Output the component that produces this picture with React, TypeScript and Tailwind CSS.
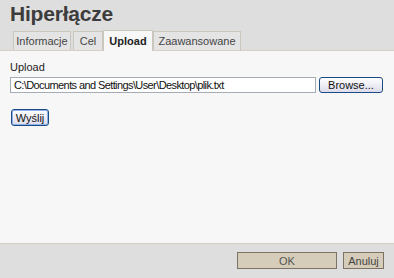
import React from "react";

const font = { fontFamily: '"Liberation Sans", Arial, sans-serif' };

export default function App() {
  return (
    <div
      className="w-[394px] h-[278px] bg-[#dedede] flex flex-col overflow-hidden text-[11px] text-[#222]"
      style={font}
    >
      <div className="h-[29px] pl-[10px] pt-[1px] text-[21px] leading-[25px] font-bold text-[#3c3c3c] tracking-[-0.2px]">
        Hiperłącze
      </div>
      <div className="h-[21px] flex items-end pl-[13px]">
        <div className="w-[58px] h-[19px] mr-[2px] border border-b-0 border-[#cbc7bc] bg-[#e4e4e4] text-[#444] leading-[18px] text-center">
          Informacje
        </div>
        <div className="w-[30px] h-[19px] border border-b-0 border-[#cbc7bc] bg-[#e4e4e4] text-[#444] leading-[18px] text-center">
          Cel
        </div>
        <div className="w-[50px] h-[21px] border border-b-0 border-[#cbc7bc] bg-[#f7f7f7] font-bold text-[#222] leading-[21px] text-center -mb-px relative z-10">
          Upload
        </div>
        <div className="w-[88px] h-[19px] border border-b-0 border-[#cbc7bc] bg-[#e4e4e4] text-[#444] leading-[18px] text-center">
          Zaawansowane
        </div>
      </div>
      <div className="h-[194px] bg-[#f7f7f7] border-t border-b border-[#d6cfc3] flex flex-col pl-[10px] pt-[9px]">
        <div className="leading-[14px] h-[16px]">Upload</div>
        <div className="flex items-center mt-[1px]">
          <div className="w-[306px] h-[16px] border border-[#a5acb5] bg-white pl-[3px] leading-[14px] text-[#111] tracking-[-0.6px] whitespace-nowrap">
            C:\Documents and Settings\User\Desktop\plik.txt
          </div>
          <div className="ml-[3px] w-[64px] h-[16px] rounded-[3px] border border-[#1c4a82] bg-gradient-to-b from-white to-[#dcdcec] flex items-center justify-center leading-[14px] text-[#111]">
            Browse...
          </div>
        </div>
        <div className="mt-[16px] ml-[1px] w-[38px] h-[17px] rounded-[3px] border border-[#1c4a82] bg-gradient-to-b from-white to-[#dcdcec] shadow-[inset_0_0_0_1px_#8fb0e8] flex items-center justify-center leading-[14px] text-[#111]">
          Wyślij
        </div>
      </div>
      <div className="flex-1 flex items-start justify-end pt-[8px] pr-[10px] gap-[6px]">
        <div className="w-[100px] h-[17px] border border-[#7a7366] bg-[#d5ccb9] flex items-center justify-center text-[#555] leading-[14px]">
          OK
        </div>
        <div className="w-[41px] h-[17px] border border-[#7a7366] bg-[#d5ccb9] flex items-center justify-center text-[#444] leading-[14px]">
          Anuluj
        </div>
      </div>
    </div>
  );
}
